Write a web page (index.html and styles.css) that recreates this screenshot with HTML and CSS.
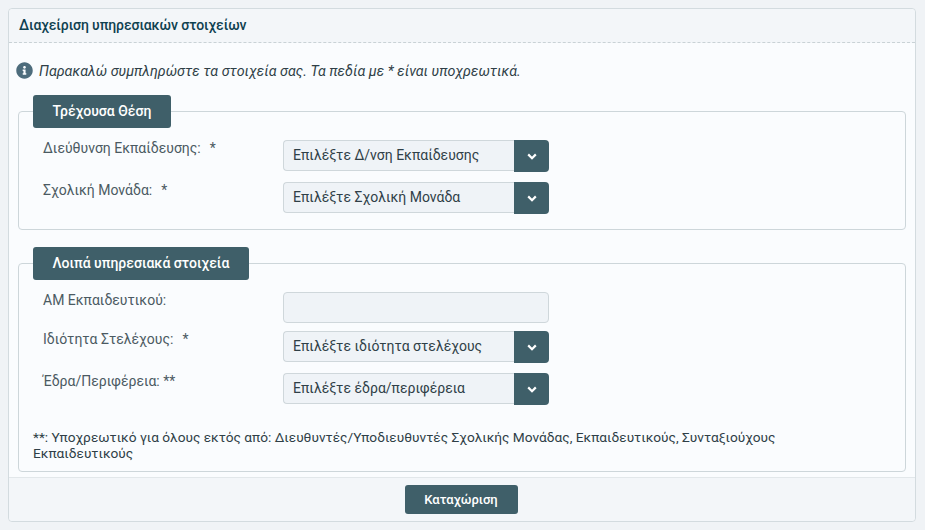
FILE: index.html
```html
<!DOCTYPE html>
<html lang="el">
<head>
    <meta charset="UTF-8">
    <meta name="viewport" content="width=device-width, initial-scale=1.0">
    <title>Διαχείριση υπηρεσιακών στοιχείων</title>
    <link rel="stylesheet" href="styles.css">
</head>
<body>
    <div class="panel">
        <div class="panel-header">Διαχείριση υπηρεσιακών στοιχείων</div>

        <div class="panel-body">
            <p class="info">
                <svg class="info-icon" viewBox="0 0 512 512"><path d="M256 8C119 8 8 119 8 256s111 248 248 248 248-111 248-248S393 8 256 8zm0 110c23.196 0 42 18.804 42 42s-18.804 42-42 42-42-18.804-42-42 18.804-42 42-42zm56 254c0 6.627-5.373 12-12 12h-88c-6.627 0-12-5.373-12-12v-24c0-6.627 5.373-12 12-12h12v-64h-12c-6.627 0-12-5.373-12-12v-24c0-6.627 5.373-12 12-12h64c6.627 0 12 5.373 12 12v100h12c6.627 0 12 5.373 12 12v24z"/></svg>
                <em>Παρακαλώ συμπληρώστε τα στοιχεία σας. Τα πεδία με * είναι υποχρεωτικά.</em>
            </p>

            <!-- Current position -->
            <fieldset class="group group-first">
                <legend>Τρέχουσα Θέση</legend>
                <div class="row">
                    <label>Διεύθυνση Εκπαίδευσης:<span class="req">*</span></label>
                    <div class="select">
                        <span class="select-text">Επιλέξτε Δ/νση Εκπαίδευσης</span>
                        <span class="select-btn"><svg viewBox="0 0 10 7"><path d="M1.2 1.4 5 5.2l3.8-3.8"/></svg></span>
                    </div>
                </div>
                <div class="row">
                    <label>Σχολική Μονάδα:<span class="req">*</span></label>
                    <div class="select">
                        <span class="select-text">Επιλέξτε Σχολική Μονάδα</span>
                        <span class="select-btn"><svg viewBox="0 0 10 7"><path d="M1.2 1.4 5 5.2l3.8-3.8"/></svg></span>
                    </div>
                </div>
            </fieldset>

            <!-- Other details -->
            <fieldset class="group group-second">
                <legend>Λοιπά υπηρεσιακά στοιχεία</legend>
                <div class="row row-input">
                    <label>ΑΜ Εκπαιδευτικού:</label>
                    <input type="text" class="text-input">
                </div>
                <div class="row">
                    <label>Ιδιότητα Στελέχους:<span class="req">*</span></label>
                    <div class="select">
                        <span class="select-text">Επιλέξτε ιδιότητα στελέχους</span>
                        <span class="select-btn"><svg viewBox="0 0 10 7"><path d="M1.2 1.4 5 5.2l3.8-3.8"/></svg></span>
                    </div>
                </div>
                <div class="row">
                    <label>Έδρα/Περιφέρεια: **</label>
                    <div class="select">
                        <span class="select-text">Επιλέξτε έδρα/περιφέρεια</span>
                        <span class="select-btn"><svg viewBox="0 0 10 7"><path d="M1.2 1.4 5 5.2l3.8-3.8"/></svg></span>
                    </div>
                </div>
                <p class="note">**: Υποχρεωτικό για όλους εκτός από: Διευθυντές/Υποδιευθυντές Σχολικής Μονάδας, Εκπαιδευτικούς, Συνταξιούχους Εκπαιδευτικούς</p>
            </fieldset>
        </div>

        <div class="panel-footer">
            <button class="submit">Καταχώριση</button>
        </div>
    </div>
</body>
</html>
```

FILE: styles.css
```css
* {
    box-sizing: border-box;
}
body {
    margin: 0;
    padding: 8px 9px 8px 8px;
    background-color: #f0f3f6;
    font-family: Roboto, "Noto Sans", sans-serif;
    font-size: 14px;
    color: #2f3f47;
}
.panel {
    height: 514px;
    display: flex;
    flex-direction: column;
    background-color: #fafcfe;
    border: 1px solid #d3dbdf;
    border-radius: 4px;
}
.panel-header {
    height: 34px;
    padding: 8px 10px 0;
    background-color: #f3f6f9;
    border-bottom: 1px dashed #c9d2d6;
    border-radius: 4px 4px 0 0;
    font-size: 14px;
    font-weight: 500;
    letter-spacing: -0.1px;
    line-height: 17px;
    color: #0f4150;
}
.panel-body {
    flex: 1;
    padding: 0 9px;
}
.info {
    display: flex;
    align-items: center;
    gap: 6px;
    margin: 18px 0 0 -2px;
    height: 18px;
    font-size: 14.3px;
    line-height: 20px;
}
.info em {
    padding-top: 1px;
}
.info-icon {
    width: 17px;
    height: 17px;
    fill: #4d6c7c;
}
.group {
    margin: 0;
    padding: 0 0 0 14px;
    border: 1px solid #cdd6da;
    border-radius: 4px;
    min-width: 0;
}
.group-first {
    height: 135px;
    margin-top: 16px;
}
.group-second {
    height: 225px;
    margin-top: 17px;
}
.group legend {
    height: 33px;
    margin-left: 0;
    padding: 0 19.5px;
    background-color: #3f5f69;
    border-radius: 3px;
    color: #fff;
    font-weight: 500;
    line-height: 33px;
}
.row {
    display: flex;
    margin: 0 0 10px 10px;
    height: 32px;
}
.group-first .row:first-of-type {
    margin-top: 12px;
}
.row-input {
    margin-top: 12px;
    margin-bottom: 8px;
    height: 31px;
}
.row label {
    width: 240px;
    padding-top: 1px;
    line-height: 15px;
    color: #4b5a62;
}
.req {
    margin-left: 9px;
}
.select {
    width: 266px;
    height: 32px;
    display: flex;
}
.select-text {
    flex: 1;
    height: 31px;
    padding-left: 9px;
    background-color: #eff3f7;
    border: 1px solid #cfd7db;
    border-right: none;
    border-radius: 4px 0 0 4px;
    line-height: 29px;
}
.select-btn {
    width: 35px;
    display: flex;
    align-items: center;
    justify-content: center;
    background-color: #3f5f69;
    border-radius: 0 4px 4px 0;
}
.select-btn svg {
    width: 10px;
    height: 7px;
    fill: none;
    stroke: #fff;
    stroke-width: 2.2;
}
.text-input {
    width: 266px;
    height: 31px;
    background-color: #eff3f7;
    border: 1px solid #cfd7db;
    border-radius: 4px;
}
.note {
    margin: 24px 40px 0 0;
    font-size: 13.7px;
    line-height: 16px;
}
.panel-footer {
    height: 44px;
    display: flex;
    justify-content: center;
    align-items: flex-start;
    padding: 7px 2px 0 0;
    background-color: #f3f6f9;
    border-top: 1px solid #e2e7ea;
    border-radius: 0 0 4px 4px;
}
.submit {
    width: 113px;
    height: 29px;
    padding: 0;
    background-color: #3f5f69;
    border: none;
    border-radius: 3px;
    color: #fff;
    font-family: inherit;
    font-size: 13px;
    font-weight: 500;
}
```
